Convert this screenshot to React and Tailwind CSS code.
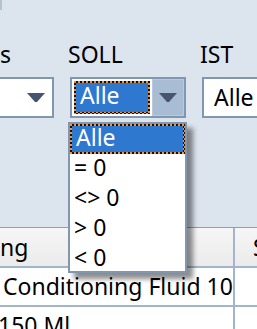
import React from "react";

const checker =
  "bg-[repeating-conic-gradient(#111_0_25%,#f2923a_0_50%)] bg-[length:4px_4px]";

function Arrow({ className = "" }) {
  return (
    <svg width="18" height="10" viewBox="0 0 18 10" className={className}>
      <path d="M0 0 H18 L10 9 H8 Z" fill="#45556f" />
    </svg>
  );
}

function ComboBox({ value, focused }) {
  return (
    <div className="flex h-[41px] border-2 border-[#8196b0] bg-white">
      <div className="w-[80px] p-[2px]">
        {focused ? (
          <div className={`h-full p-[2px] ${checker}`}>
            <div className="h-full bg-[#2f78cf] pl-[4px] leading-[24px] text-white">{value}</div>
          </div>
        ) : (
          <div className="h-full pl-[8px] pt-[4px] leading-[24px]">{value}</div>
        )}
      </div>
      <div
        className={`flex flex-1 items-center justify-center ${
          focused ? "border border-[#bac9db] bg-[#a8bcd4]" : ""
        }`}
      >
        <Arrow />
      </div>
    </div>
  );
}

const options = ["Alle", "= 0", "<> 0", "> 0", "< 0"];

export default function App() {
  return (
    <div className="relative h-[329px] w-[257px] overflow-hidden bg-[#dce4ee] font-['Noto_Sans',sans-serif] text-[23px] text-black">
      <div className="h-[10px] w-[2px] bg-[#b7c2cf]" />

      <div className="mt-[28px] flex gap-[16px]">
        <div className="-ml-[62px] w-[116px] shrink-0">
          <div className="h-[32px] pl-[62px] leading-[32px]">s</div>
          <div className="mt-[7px]">
            <ComboBox value="" />
          </div>
        </div>
        <div className="w-[116px] shrink-0">
          <div className="-ml-[2px] h-[32px] leading-[32px]">SOLL</div>
          <div className="mt-[7px]">
            <ComboBox value="Alle" focused />
          </div>
        </div>
        <div className="w-[116px] shrink-0">
          <div className="-ml-[2px] h-[32px] leading-[32px]">IST</div>
          <div className="mt-[7px]">
            <ComboBox value="Alle" />
          </div>
        </div>
      </div>

      {/* grid */}
      <div className="mt-[109px] border-t border-[#8e9fb5]">
        <div className="flex h-[40px] border-b-2 border-[#a2b5cb] bg-gradient-to-b from-[#f6f6f6] to-[#ebebeb]">
          <div className="w-[233px] overflow-hidden whitespace-nowrap pt-[5px] leading-[28px]">ng</div>
          <div className="w-[2px] bg-[#a2b5cb]" />
          <div className="flex-1 overflow-hidden whitespace-nowrap pl-[18px] pt-[5px] leading-[28px]">Soll</div>
        </div>
        <div className="flex h-[39px] border-b-2 border-[#a2b5cb] bg-white">
          <div className="w-[233px] overflow-hidden whitespace-nowrap pl-[3px] pt-[4px] leading-[28px]">
            Conditioning Fluid 100 Ml
          </div>
          <div className="w-[2px] bg-[#a2b5cb]" />
          <div className="flex-1" />
        </div>
        <div className="flex h-[39px] bg-white">
          <div className="-ml-[2px] w-[235px] overflow-hidden whitespace-nowrap pt-[4px] leading-[28px]">150 Ml</div>
          <div className="w-[2px] bg-[#a2b5cb]" />
          <div className="flex-1" />
        </div>
      </div>

      {/* open dropdown list */}
      <div className="absolute left-[68px] top-[122px] h-[151px] w-[119px] overflow-hidden border-2 border-[#8196b0] bg-white shadow-[6px_6px_5px_rgba(0,0,0,0.45)]">
        {options.map((o, i) =>
          i === 0 ? (
            <div key={o} className={`h-[30px] p-[2px] ${checker}`}>
              <div className="h-full bg-[#2f78cf] pl-[4px] leading-[22px] text-white">{o}</div>
            </div>
          ) : (
            <div key={o} className="h-[30px] whitespace-pre pl-[4px] leading-[26px]">
              {o}
            </div>
          )
        )}
      </div>
    </div>
  );
}
